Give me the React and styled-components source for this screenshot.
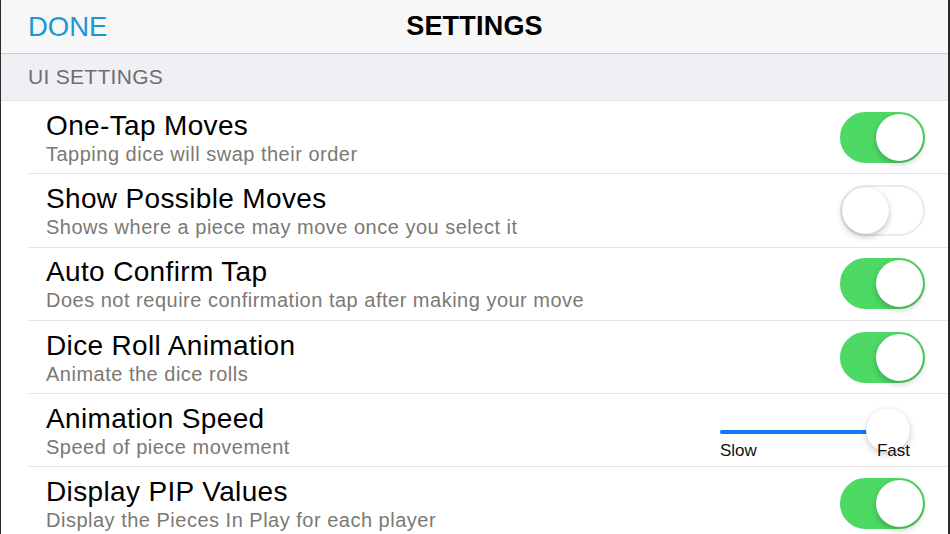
import React, { useState } from "react";
import styled, { createGlobalStyle } from "styled-components";

const GlobalStyle = createGlobalStyle`
  html, body {
    margin: 0;
    padding: 0;
    background: #ffffff;
    font-family: "Liberation Sans", Arial, sans-serif;
    overflow: hidden;
  }
`;

const Frame = styled.div`
  width: 950px;
  height: 534px;
  box-sizing: border-box;
  border-left: 1px solid #2b2b2b;
  border-right: 2px solid #2b2b2b;
  background: #ffffff;
  overflow: hidden;
`;

const NavBar = styled.div`
  height: 53px;
  background: #f7f7f7;
  border-bottom: 1px solid #cfcfd3;
  display: grid;
  grid-template-columns: 1fr auto 1fr;
  align-items: center;
  padding: 0 27px;
`;

const DoneButton = styled.button`
  justify-self: start;
  background: none;
  border: none;
  padding: 0;
  font-family: inherit;
  font-size: 27.5px;
  color: #1a97d5;
  cursor: pointer;
`;

const Title = styled.h1`
  margin: 0;
  font-size: 27px;
  font-weight: 700;
  color: #000;
  letter-spacing: 0.2px;
`;

const SectionHeader = styled.div`
  height: 46px;
  background: #efeff4;
  border-bottom: 1px solid #e2e2e6;
  display: flex;
  align-items: center;
  padding-left: 27px;
  font-size: 21px;
  letter-spacing: 0.3px;
  color: #6d6d72;
`;

const List = styled.div`
  padding-left: 27px;
`;

const Row = styled.div`
  height: 73.3px;
  box-sizing: border-box;
  border-bottom: 1px solid #e3e3e6;
  display: flex;
  align-items: center;
  justify-content: space-between;
  padding-left: 18px;
  padding-right: ${(p) => p.$pad || 23}px;
`;

const Texts = styled.div`
  display: flex;
  flex-direction: column;
  padding-top: 1px;
`;

const RowTitle = styled.div`
  font-size: 28px;
  line-height: 32px;
  color: #000;
  letter-spacing: 0.35px;
`;

const RowSub = styled.div`
  font-size: 20px;
  line-height: 24px;
  color: #7d7873;
  letter-spacing: 0.5px;
`;

const Track = styled.div`
  width: 85px;
  height: 51px;
  box-sizing: border-box;
  border-radius: 26px;
  position: relative;
  background: ${(p) => (p.$on ? "#4cd964" : "#ffffff")};
  border: 2px solid ${(p) => (p.$on ? "#4cd964" : "#ebebeb")};
  cursor: pointer;
`;

const Knob = styled.div`
  position: absolute;
  top: 0;
  left: ${(p) => (p.$on ? "34px" : "0px")};
  width: 47px;
  height: 47px;
  border-radius: 50%;
  background: #ffffff;
  box-shadow: 0 3px 6px rgba(0, 0, 0, 0.22), 0 0 1px rgba(0, 0, 0, 0.15);
`;

const SliderBox = styled.div`
  width: 190px;
  display: flex;
  flex-direction: column;
  margin-top: 8px;
`;

const SliderTrack = styled.div`
  position: relative;
  height: 44px;
`;

const Rail = styled.div`
  position: absolute;
  left: 0;
  right: 0;
  top: 22px;
  height: 4px;
  border-radius: 2px;
  background: #b7b7b7;
`;

const Fill = styled.div`
  height: 100%;
  border-radius: 2px;
  background: #0f7bfa;
`;

const SliderKnob = styled.div`
  position: absolute;
  top: 0;
  width: 44px;
  height: 44px;
  margin-left: -22px;
  border-radius: 50%;
  background: #ffffff;
  box-shadow: 0 3px 7px rgba(0, 0, 0, 0.2), 0 0 1px rgba(0, 0, 0, 0.12);
`;

const SliderLabels = styled.div`
  display: flex;
  justify-content: space-between;
  margin-top: -11px;
  font-size: 17px;
  line-height: 20px;
  color: #111;
  position: relative;
`;

function Toggle({ on, onChange }) {
  return (
    <Track $on={on} onClick={() => onChange(!on)}>
      <Knob $on={on} />
    </Track>
  );
}

function SpeedSlider({ value }) {
  // knob travels between 22 and 168 inside the 190px box
  const x = 22 + (146 * value) / 100;
  return (
    <SliderBox>
      <SliderTrack>
        <Rail>
          <Fill style={{ width: x }} />
        </Rail>
        <SliderKnob style={{ left: x }} />
      </SliderTrack>
      <SliderLabels>
        <span>Slow</span>
        <span>Fast</span>
      </SliderLabels>
    </SliderBox>
  );
}

const rows = [
  { key: "oneTap", title: "One-Tap Moves", sub: "Tapping dice will swap their order" },
  { key: "possible", title: "Show Possible Moves", sub: "Shows where a piece may move once you select it" },
  { key: "confirm", title: "Auto Confirm Tap", sub: "Does not require confirmation tap after making your move" },
  { key: "dice", title: "Dice Roll Animation", sub: "Animate the dice rolls" },
  { key: "speed", title: "Animation Speed", sub: "Speed of piece movement", slider: true },
  { key: "pip", title: "Display PIP Values", sub: "Display the Pieces In Play for each player" },
];

export default function App() {
  const [settings, setSettings] = useState({
    oneTap: true,
    possible: false,
    confirm: true,
    dice: true,
    pip: true,
  });

  return (
    <>
      <GlobalStyle />
      <Frame>
        <NavBar>
          <DoneButton>DONE</DoneButton>
          <Title>SETTINGS</Title>
          <span />
        </NavBar>
        <SectionHeader>UI SETTINGS</SectionHeader>
        <List>
          {rows.map((r) => (
            <Row key={r.key} $pad={r.slider ? 38 : 23}>
              <Texts>
                <RowTitle>{r.title}</RowTitle>
                <RowSub>{r.sub}</RowSub>
              </Texts>
              {r.slider ? (
                <SpeedSlider value={100} />
              ) : (
                <Toggle
                  on={settings[r.key]}
                  onChange={(v) => setSettings({ ...settings, [r.key]: v })}
                />
              )}
            </Row>
          ))}
        </List>
      </Frame>
    </>
  );
}
